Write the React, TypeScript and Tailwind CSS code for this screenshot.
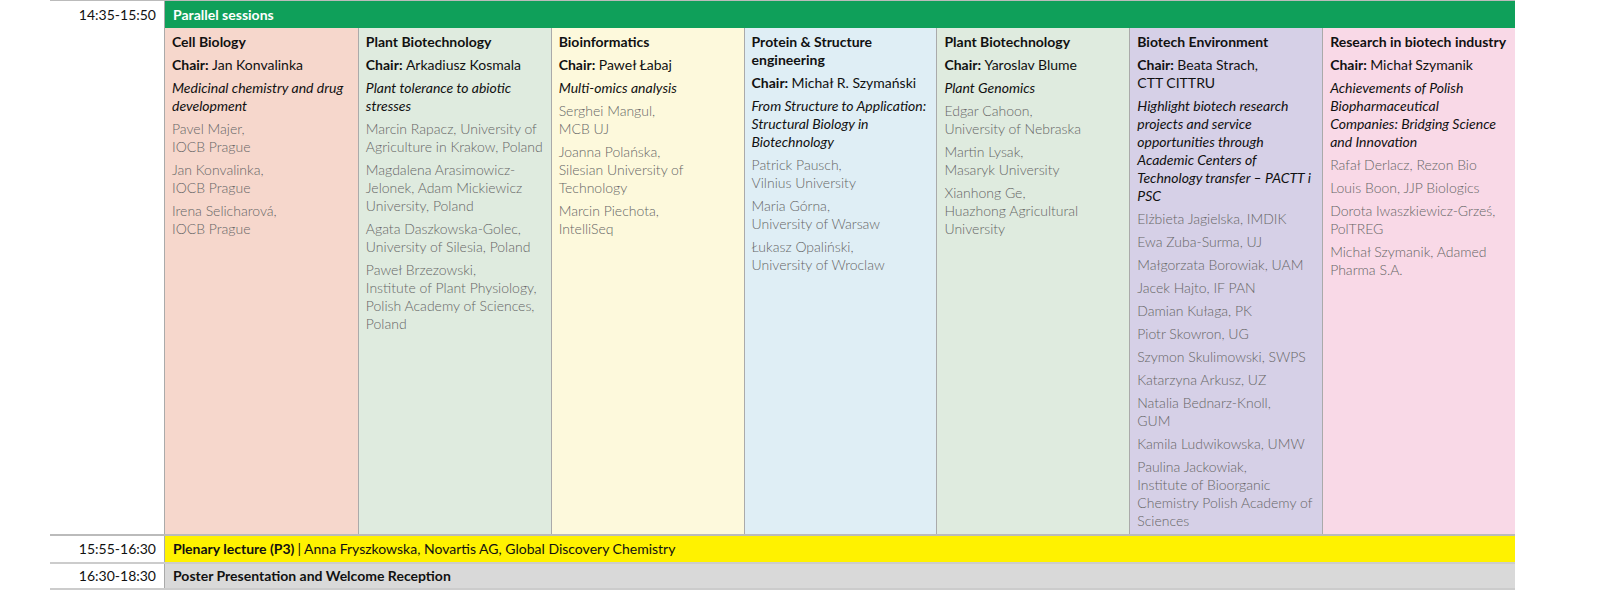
import React from "react";

type Session = {
  title: string;
  chair: string;
  topic: string;
  bg: string;
  speakers: string[];
};

const sessions: Session[] = [
  {
    title: "Cell Biology",
    chair: "Jan Konvalinka",
    topic: "Medicinal chemistry and drug development",
    bg: "bg-[#f6d7cc]",
    speakers: ["Pavel Majer,\nIOCB Prague", "Jan Konvalinka,\nIOCB Prague", "Irena Selicharová,\nIOCB Prague"],
  },
  {
    title: "Plant Biotechnology",
    chair: "Arkadiusz Kosmala",
    topic: "Plant tolerance to abiotic stresses",
    bg: "bg-[#dfebdf]",
    speakers: [
      "Marcin Rapacz, University of Agriculture in Krakow, Poland",
      "Magdalena Arasimowicz-Jelonek, Adam Mickiewicz University, Poland",
      "Agata Daszkowska-Golec, University of Silesia, Poland",
      "Paweł Brzezowski,\nInstitute of Plant Physiology, Polish Academy of Sciences, Poland",
    ],
  },
  {
    title: "Bioinformatics",
    chair: "Paweł Łabaj",
    topic: "Multi-omics analysis",
    bg: "bg-[#fdf9dc]",
    speakers: ["Serghei Mangul,\nMCB UJ", "Joanna Polańska,\nSilesian University of Technology", "Marcin Piechota,\nIntelliSeq"],
  },
  {
    title: "Protein & Structure engineering",
    chair: "Michał R. Szymański",
    topic: "From Structure to Application: Structural Biology in Biotechnology",
    bg: "bg-[#dfeef5]",
    speakers: ["Patrick Pausch,\nVilnius University", "Maria Górna,\nUniversity of Warsaw", "Łukasz Opaliński,\nUniversity of Wroclaw"],
  },
  {
    title: "Plant Biotechnology",
    chair: "Yaroslav Blume",
    topic: "Plant Genomics",
    bg: "bg-[#dfebdf]",
    speakers: ["Edgar Cahoon,\nUniversity of Nebraska", "Martin Lysak,\nMasaryk University", "Xianhong Ge,\nHuazhong Agricultural University"],
  },
  {
    title: "Biotech Environment",
    chair: "Beata Strach,\nCTT CITTRU",
    topic: "Highlight biotech research projects and service opportunities through Academic Centers of Technology transfer – PACTT i PSC",
    bg: "bg-[#d6d0e7]",
    speakers: [
      "Elżbieta Jagielska, IMDIK",
      "Ewa Zuba-Surma, UJ",
      "Małgorzata Borowiak, UAM",
      "Jacek Hajto, IF PAN",
      "Damian Kułaga, PK",
      "Piotr Skowron, UG",
      "Szymon Skulimowski, SWPS",
      "Katarzyna Arkusz, UZ",
      "Natalia Bednarz-Knoll,\nGUM",
      "Kamila Ludwikowska, UMW",
      "Paulina Jackowiak,\nInstitute of Bioorganic Chemistry Polish Academy of Sciences",
    ],
  },
  {
    title: "Research in biotech industry",
    chair: "Michał Szymanik",
    topic: "Achievements of Polish Biopharmaceutical Companies: Bridging Science and Innovation",
    bg: "bg-[#f9d9e7]",
    speakers: ["Rafał Derlacz, Rezon Bio", "Louis Boon, JJP Biologics", "Dorota Iwaszkiewicz-Grześ, PolTREG", "Michał Szymanik, Adamed Pharma S.A."],
  },
];

export default function App() {
  return (
    <div className="w-[1600px] h-[600px] bg-white text-[14px] leading-[18px] text-[#111] font-[Lato,sans-serif]">
      <div className="ml-[50px] w-[1465px] border-t border-[#bbb]">
        <div className="flex">
          <div className="w-[114px] shrink-0 text-right pr-[8px] pt-[5px]">14:35-15:50</div>
          <div className="flex-1 border-l border-[#aaa]">
            <div className="bg-[#0fa05a] text-white font-bold h-[27px] flex items-center px-[8px]">Parallel sessions</div>
            <div className="grid grid-cols-7 h-[506px]">
              {sessions.map((s, i) => (
                <div key={i} className={`${s.bg} ${i > 0 ? "border-l border-[#aaa]" : ""} px-[7px] pt-[5px]`}>
                  <div className="font-bold">{s.title}</div>
                  <div className="mt-[5px] whitespace-pre-line">
                    <span className="font-bold">Chair: </span>
                    {s.chair}
                  </div>
                  <div className="mt-[5px] italic">{s.topic}</div>
                  {s.speakers.map((sp, j) => (
                    <div key={j} className="mt-[5px] text-[#666] font-light whitespace-pre-line">{sp}</div>
                  ))}
                </div>
              ))}
            </div>
          </div>
        </div>
        <div className="flex border-t-2 border-[#bbb] h-[28px]">
          <div className="w-[114px] shrink-0 text-right pr-[8px] flex items-center justify-end">15:55-16:30</div>
          <div className="flex-1 border-l border-[#aaa] bg-[#fff200] flex items-center px-[8px]">
            <span className="font-bold">Plenary lecture (P3)</span>
            <span className="ml-[3px]">| Anna Fryszkowska, Novartis AG, Global Discovery Chemistry</span>
          </div>
        </div>
        <div className="flex border-t-2 border-b-2 border-[#ccc] h-[28px]">
          <div className="w-[114px] shrink-0 text-right pr-[8px] flex items-center justify-end">16:30-18:30</div>
          <div className="flex-1 border-l border-[#aaa] bg-[#d9d9d9] flex items-center px-[8px] font-bold">
            Poster Presentation and Welcome Reception
          </div>
        </div>
      </div>
    </div>
  );
}
